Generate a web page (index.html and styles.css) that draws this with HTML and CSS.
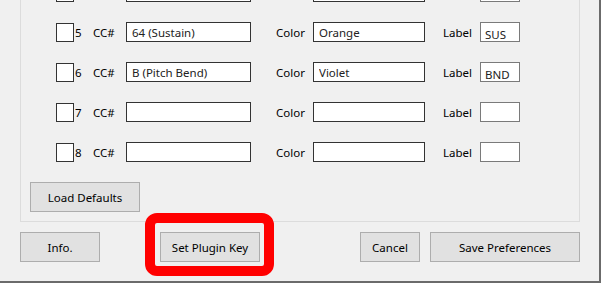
FILE: index.html
```html
<!DOCTYPE html>
<html lang="en">

<head>
    <meta charset="UTF-8">
    <meta name="viewport" content="width=device-width, initial-scale=1.0">
    <title>Preferences</title>
    <link rel="stylesheet" href="styles.css">
</head>

<body>
    <div class="window">
        <div class="group">
            <!-- row 4 is scrolled above the visible area -->
            <div class="row">
                <input type="checkbox" class="check"><span class="num"></span>
                <span class="lbl-cc"></span><input type="text" class="field cc">
                <span class="lbl-color"></span><input type="text" class="field color">
                <span class="lbl-label"></span><input type="text" class="field tag">
            </div>
            <div class="row">
                <input type="checkbox" class="check"><span class="num">5</span>
                <span class="lbl-cc">CC#</span><input type="text" class="field cc" value="64 (Sustain)">
                <span class="lbl-color">Color</span><input type="text" class="field color" value="Orange">
                <span class="lbl-label">Label</span><input type="text" class="field tag" value="SUS">
            </div>
            <div class="row">
                <input type="checkbox" class="check"><span class="num">6</span>
                <span class="lbl-cc">CC#</span><input type="text" class="field cc" value="B (Pitch Bend)">
                <span class="lbl-color">Color</span><input type="text" class="field color" value="Violet">
                <span class="lbl-label">Label</span><input type="text" class="field tag" value="BND">
            </div>
            <div class="row">
                <input type="checkbox" class="check"><span class="num">7</span>
                <span class="lbl-cc">CC#</span><input type="text" class="field cc">
                <span class="lbl-color">Color</span><input type="text" class="field color">
                <span class="lbl-label">Label</span><input type="text" class="field tag">
            </div>
            <div class="row">
                <input type="checkbox" class="check"><span class="num">8</span>
                <span class="lbl-cc">CC#</span><input type="text" class="field cc">
                <span class="lbl-color">Color</span><input type="text" class="field color">
                <span class="lbl-label">Label</span><input type="text" class="field tag">
            </div>
            <button type="button" class="btn btn-defaults">Load Defaults</button>
        </div>

        <div class="actions">
            <button type="button" class="btn btn-info">Info.</button>
            <button type="button" class="btn btn-key">Set Plugin Key</button>
            <button type="button" class="btn btn-cancel">Cancel</button>
            <button type="button" class="btn btn-save">Save Preferences</button>
        </div>
    </div>
</body>

</html>
```

FILE: styles.css
```css
body {
    margin: 0;
    font-family: "Noto Sans", "Open Sans", sans-serif;
    font-size: 11.5px;
    color: #000;
    background: #f0f0f0;
}

.window {
    width: 601px;
    height: 283px;
    box-sizing: border-box;
    border-right: 2px solid #6b6b6b;
    border-bottom: 2px solid #6b6b6b;
    background: #f0f0f0;
    overflow: hidden;
    display: flex;
    flex-direction: column;
}

.group {
    margin: -59px 0 0 20px;
    width: 560px;
    box-sizing: border-box;
    border: 1px solid #dcdcdc;
    border-top: none;
    padding: 41px 0 9px 9px;
    display: flex;
    flex-direction: column;
    align-items: flex-start;
    gap: 20px;
    flex-shrink: 0;
}

.row {
    display: flex;
    align-items: center;
    height: 20px;
    padding-left: 26px;
}

.check {
    appearance: none;
    -webkit-appearance: none;
    width: 18px;
    height: 19px;
    margin: 0;
    border: 1px solid #333;
    background: #fff;
    box-sizing: border-box;
}

.num {
    width: 18px;
    padding-left: 1px;
}

.lbl-cc {
    width: 33px;
}

.lbl-color {
    width: 37px;
    margin-left: 25px;
}

.lbl-label {
    width: 37px;
    margin-left: 18px;
}

.field {
    height: 20px;
    box-sizing: border-box;
    margin: 0;
    border: 1px solid #333;
    background: #fff;
    font: inherit;
    color: #222;
    padding: 0 5px;
    outline: none;
}

.field.cc {
    width: 125px;
}

.field.color {
    width: 112px;
}

.field.tag {
    width: 40px;
    border-color: #7a7a7a;
    padding: 4px 4px 0;
    line-height: 15px;
}

.btn {
    height: 30px;
    margin: 0;
    padding: 0;
    border: 1px solid #adadad;
    background: #e1e1e1;
    font: inherit;
    color: #000;
}

.btn-defaults {
    width: 110px;
}

.actions {
    display: flex;
    margin: 10px 0 0 20px;
}

.btn-info {
    width: 80px;
}

.btn-key {
    width: 100px;
    margin-left: 60px;
    position: relative;
}

.btn-key::after {
    content: "";
    position: absolute;
    left: -16px;
    top: -20px;
    right: -15px;
    bottom: -15px;
    border: 10px solid #ff0000;
    border-radius: 12px;
}

.btn-cancel {
    width: 60px;
    margin-left: 100px;
}

.btn-save {
    width: 150px;
    margin-left: 10px;
}
```
